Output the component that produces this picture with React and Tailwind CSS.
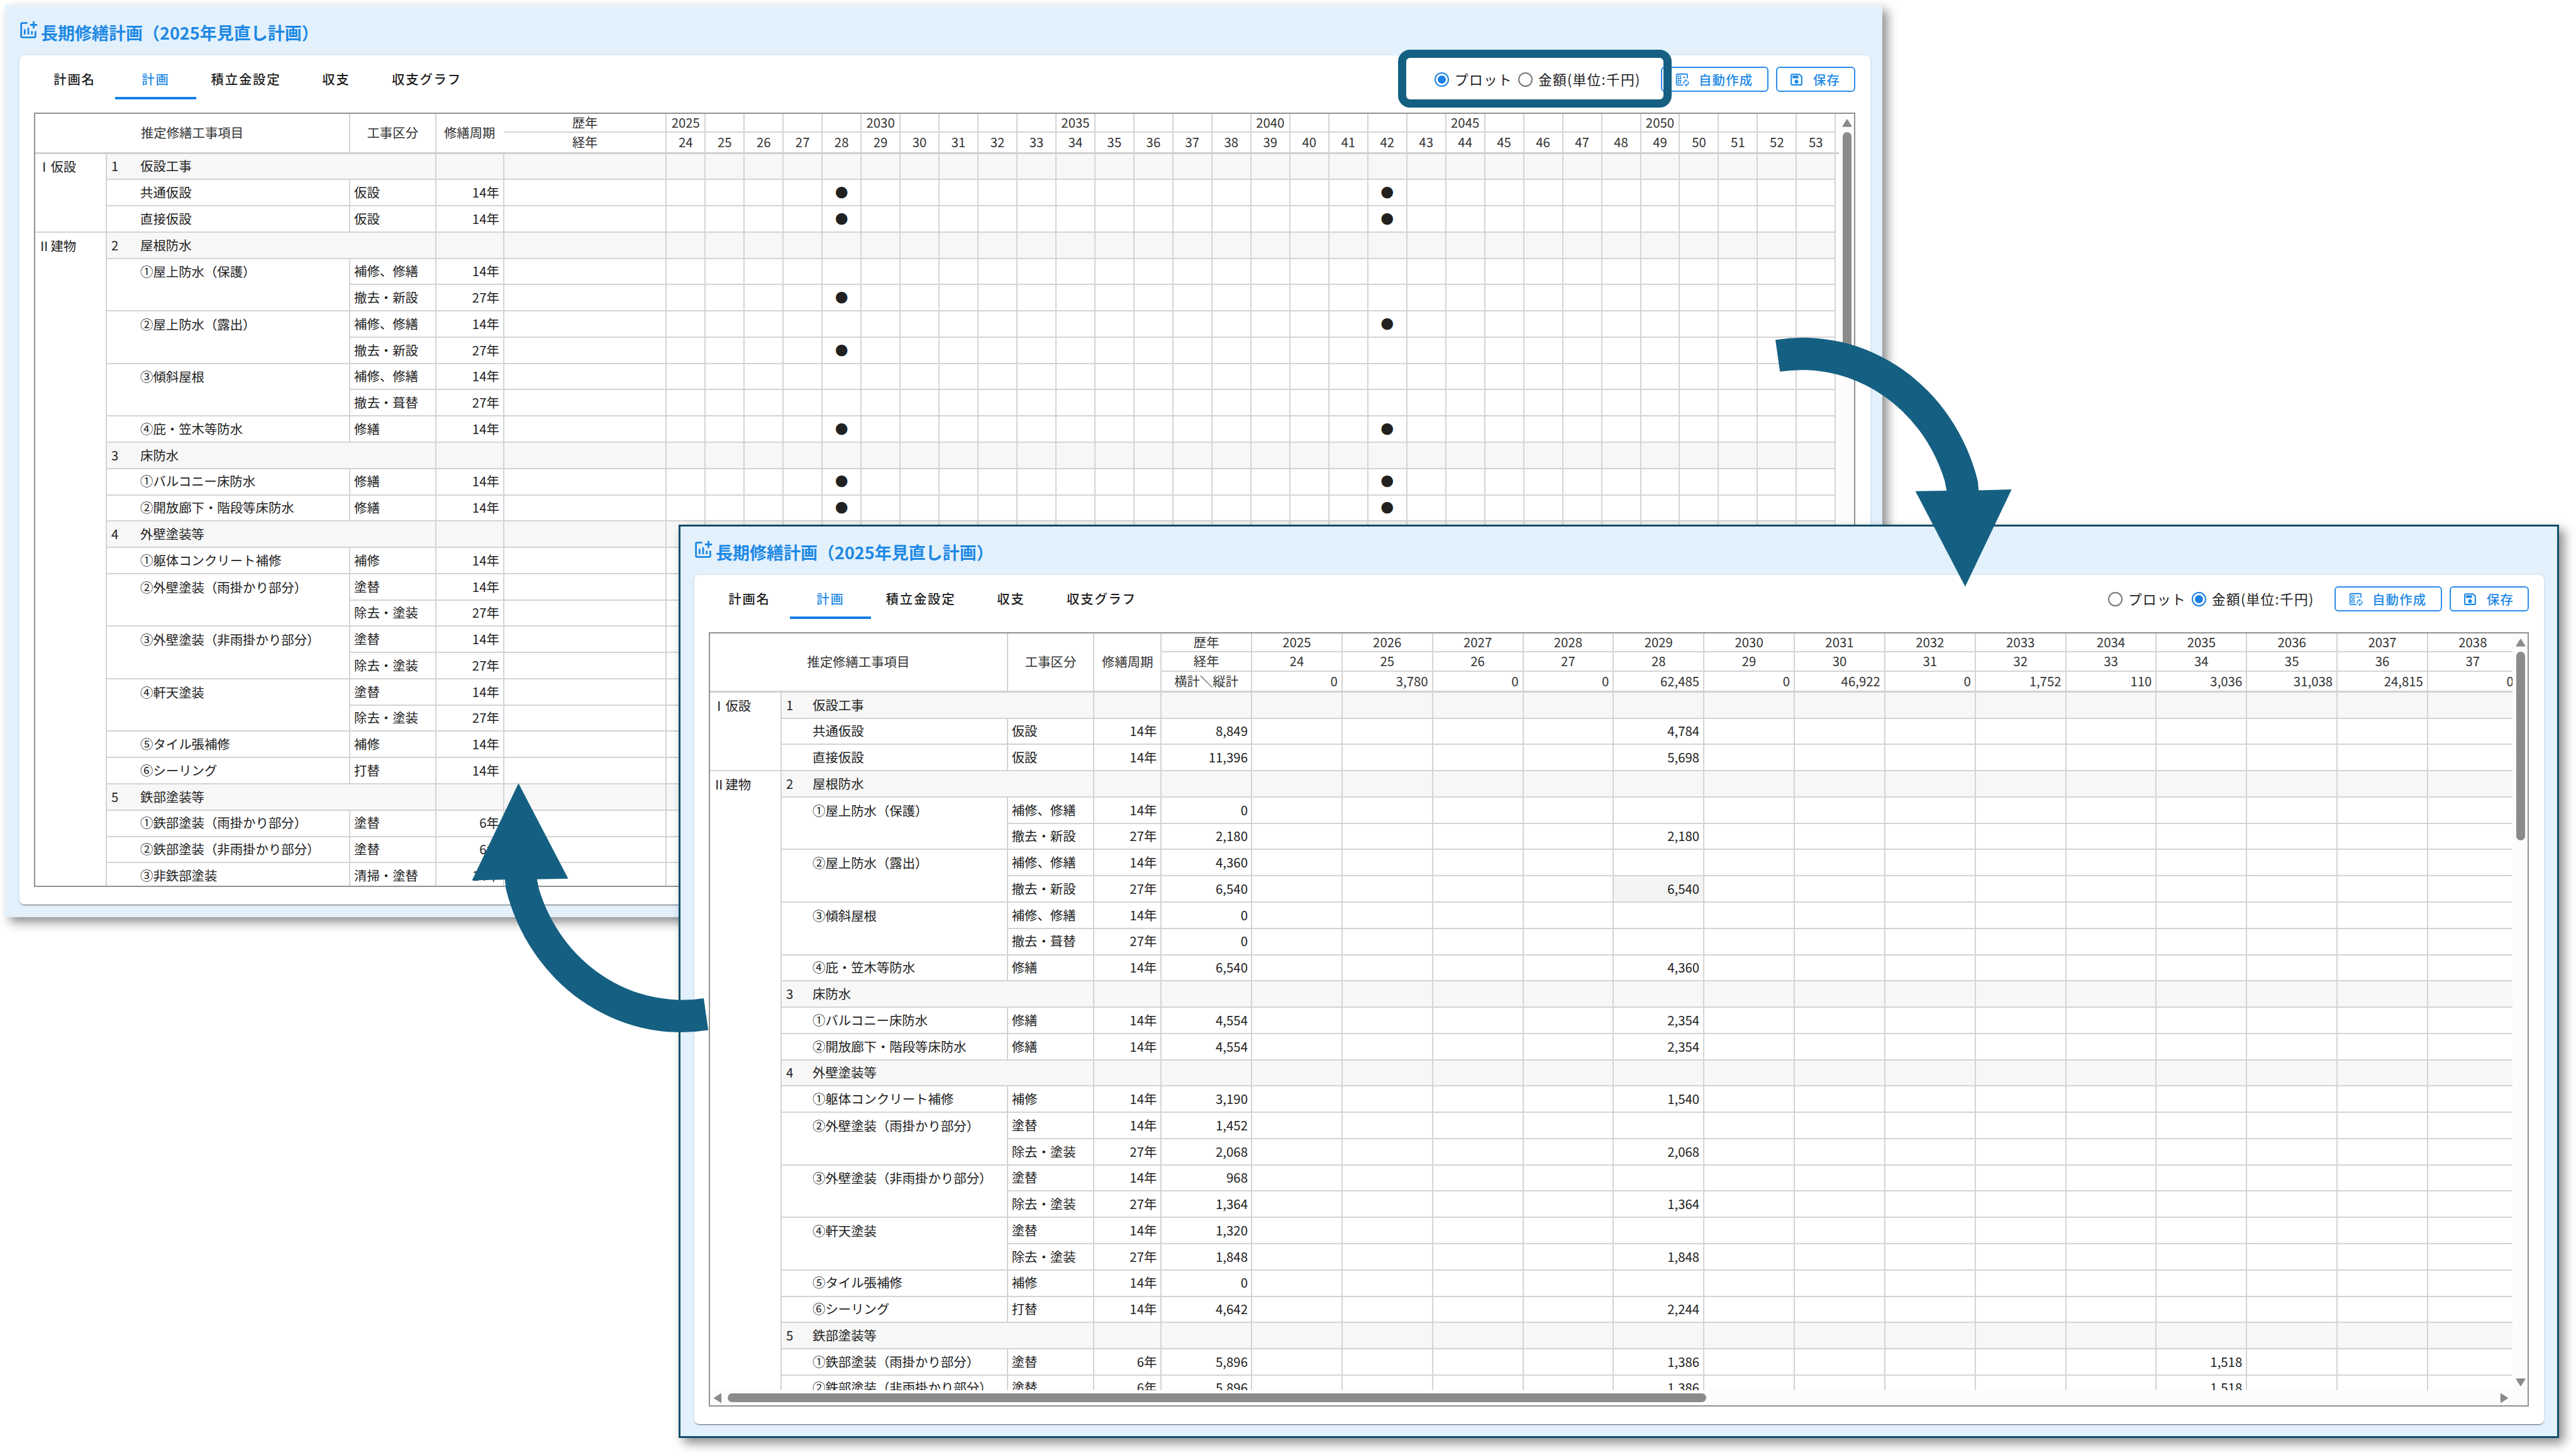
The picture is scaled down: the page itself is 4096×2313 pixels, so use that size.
import { MdOutlineAddchart, MdOutlineSave } from "react-icons/md";
import clsx from "clsx";

const TABS = [
  { label: "計画名", width: "w-[129px]" },
  { label: "計画", width: "w-[129px]", active: true },
  { label: "積立金設定", width: "w-[158px]" },
  { label: "収支", width: "w-[129px]" },
  { label: "収支グラフ", width: "w-[159px]" },
];

// plot: 経年 where a dot is drawn, amounts: 経年 -> 千円
const ROWS = [
  { cat: "Ⅰ仮設", no: "1", name: "仮設工事" },
  { name: "共通仮設", type: "仮設", cycle: 14, plot: [28, 42], sum: "8,849", amounts: { 28: "4,784" } },
  { name: "直接仮設", type: "仮設", cycle: 14, plot: [28, 42], sum: "11,396", amounts: { 28: "5,698" } },
  { cat: "Ⅱ建物", no: "2", name: "屋根防水" },
  { name: "①屋上防水（保護）", type: "補修、修繕", cycle: 14, sum: "0" },
  { type: "撤去・新設", cycle: 27, plot: [28], sum: "2,180", amounts: { 28: "2,180" } },
  { name: "②屋上防水（露出）", type: "補修、修繕", cycle: 14, plot: [42], sum: "4,360" },
  { type: "撤去・新設", cycle: 27, plot: [28], sum: "6,540", amounts: { 28: "6,540" }, hover: 28 },
  { name: "③傾斜屋根", type: "補修、修繕", cycle: 14, sum: "0" },
  { type: "撤去・葺替", cycle: 27, sum: "0" },
  { name: "④庇・笠木等防水", type: "修繕", cycle: 14, plot: [28, 42], sum: "6,540", amounts: { 28: "4,360" } },
  { no: "3", name: "床防水" },
  { name: "①バルコニー床防水", type: "修繕", cycle: 14, plot: [28, 42], sum: "4,554", amounts: { 28: "2,354" } },
  { name: "②開放廊下・階段等床防水", type: "修繕", cycle: 14, plot: [28, 42], sum: "4,554", amounts: { 28: "2,354" } },
  { no: "4", name: "外壁塗装等" },
  { name: "①躯体コンクリート補修", type: "補修", cycle: 14, sum: "3,190", amounts: { 28: "1,540" } },
  { name: "②外壁塗装（雨掛かり部分）", type: "塗替", cycle: 14, sum: "1,452" },
  { type: "除去・塗装", cycle: 27, sum: "2,068", amounts: { 28: "2,068" } },
  { name: "③外壁塗装（非雨掛かり部分）", type: "塗替", cycle: 14, sum: "968" },
  { type: "除去・塗装", cycle: 27, sum: "1,364", amounts: { 28: "1,364" } },
  { name: "④軒天塗装", type: "塗替", cycle: 14, sum: "1,320" },
  { type: "除去・塗装", cycle: 27, sum: "1,848", amounts: { 28: "1,848" } },
  { name: "⑤タイル張補修", type: "補修", cycle: 14, sum: "0" },
  { name: "⑥シーリング", type: "打替", cycle: 14, sum: "4,642", amounts: { 28: "2,244" } },
  { no: "5", name: "鉄部塗装等" },
  { name: "①鉄部塗装（雨掛かり部分）", type: "塗替", cycle: 6, sum: "5,896", amounts: { 28: "1,386", 34: "1,518" } },
  { name: "②鉄部塗装（非雨掛かり部分）", type: "塗替", cycle: 6, sum: "5,896", amounts: { 28: "1,386", 34: "1,518" } },
  { name: "③非鉄部塗装", type: "清掃・塗替", cycle: 14, sum: "" },
];

const TOTALS = ["0", "3,780", "0", "0", "62,485", "0", "46,922", "0", "1,752", "110", "3,036", "31,038", "24,815", "0"];

const PLOT = {
  head: "w-[501px]",
  cat: "w-[114px]",
  item: "w-[387px] pl-[53px]",
  no: "w-[45px]",
  group: "w-[523.5px]",
  type: "w-[136.5px]",
  cycle: "w-[108.4px]",
  sum: "w-[258.4px]",
  year: "w-[61.97px]",
  years: 30,
};

const AMOUNT = {
  head: "w-[473.7px]",
  cat: "w-[114px]",
  item: "w-[359.7px] pl-[49px]",
  no: "w-[41px]",
  group: "w-[497.4px]",
  type: "w-[137.7px]",
  cycle: "w-[107px]",
  sum: "w-[143.6px]",
  year: "w-[143.85px]",
  years: 14,
};

const LINE = "border-[#d4d4d4]";

function Cell({ className, children }) {
  return (
    <div className={clsx("flex shrink-0 items-center whitespace-nowrap border-r-2 pb-[2px]", LINE, className)}>
      {children}
    </div>
  );
}

function Arrow({ className }) {
  return (
    <svg viewBox="0 0 16 13" className={clsx("h-[13px] w-4 shrink-0 text-[#8b8b8b]", className)}>
      <path d="M8 1.6 14.4 11.8H1.6Z" fill="currentColor" stroke="currentColor" strokeWidth="2" strokeLinejoin="round" />
    </svg>
  );
}

function TableIcon() {
  return (
    <svg viewBox="0 0 24 24" className="size-[25px] shrink-0" fill="none" stroke="currentColor" strokeWidth="1.7">
      <path d="M20.200 10V5a1.400 1.400 0 0 0-1.400-1.400H5A1.400 1.400 0 0 0 3.600 5v13.800a1.400 1.400 0 0 0 1.400 1.400h8.400" />
      <path d="M6.200 6.600h3.800v4H6.200zM6.200 13.200h3.800v4H6.200zM13.400 8.600h4" strokeWidth="1.300" />
      <path d="M18 13.400a3.500 3.500 0 0 0-2.600 5.800M18.400 20.400a3.500 3.500 0 0 0 2.600-5.800" strokeWidth="1.400" />
      <path d="M17.600 11v4.800l2.600-2.400zM18.800 18v4.800l-2.600-2.400z" fill="currentColor" stroke="none" />
    </svg>
  );
}

function Radio({ checked }) {
  return (
    <span
      className={clsx(
        "flex size-[23px] shrink-0 items-center justify-center rounded-full border-2",
        checked ? "border-[#1a80e6]" : "border-[#767676]"
      )}
    >
      {checked && <span className="size-[13px] rounded-full bg-[#1a80e6]" />}
    </span>
  );
}

function Toolbar({ mode }) {
  return (
    <div className="flex h-[91px] justify-between">
      <div className="flex h-[70px]">
        {TABS.map((tab) => (
          <div
            key={tab.label}
            className={clsx(
              "flex items-center justify-center border-b-4 pt-[8px] text-[20.4px] font-medium tracking-[1.8px]",
              tab.width,
              tab.active ? "border-[#1480e6] text-[#1e88e5]" : "border-transparent text-[#1c1c1c]"
            )}
          >
            {tab.label}
          </div>
        ))}
      </div>
      <div className="flex h-10 items-center pt-[36px]">
        <label className="flex w-[133px] items-center gap-[9px] text-[21.7px] tracking-[1.3px]">
          <Radio checked={mode === "plot"} />
          プロット
        </label>
        <label className="flex w-[227px] items-center gap-[9px] text-[21.7px] tracking-[1.3px]">
          <Radio checked={mode === "amount"} />
          金額(単位:千円)
        </label>
        <button className="mr-3 flex h-10 w-[171px] items-center gap-[14px] rounded-md border-2 border-[#2b8de8] pl-[19px] text-[20.4px] font-medium tracking-[1.2px] text-[#1e88e5]">
          <TableIcon />
          <span className="pt-px">自動作成</span>
        </button>
        <button className="flex h-10 w-[126px] items-center gap-[14px] rounded-md border-2 border-[#2b8de8] pl-[18px] text-[20.4px] font-medium tracking-[1.2px] text-[#1e88e5]">
          <MdOutlineSave className="size-[25px] shrink-0" />
          <span className="pt-px">保存</span>
        </button>
      </div>
    </div>
  );
}

function HeaderRows({ cols, mode }) {
  const amount = mode === "amount";
  const years = Array.from({ length: cols.years }, (_, i) => i);
  return (
    <div className="flex border-b-[3px] border-[#d0d0d0] text-[#333]">
      <Cell className={clsx("justify-center", cols.head)}>推定修繕工事項目</Cell>
      <Cell className={clsx("justify-center", cols.type)}>工事区分</Cell>
      <Cell className={clsx("justify-center", cols.cycle, !amount && "border-r-transparent")}>修繕周期</Cell>
      <div className="flex shrink-0 flex-col">
        <Cell className={clsx("h-[30.3px] justify-center border-b-2", cols.sum)}>歴年</Cell>
        <Cell className={clsx("h-[30.3px] justify-center", cols.sum, amount && "border-b-2")}>経年</Cell>
        {amount && <Cell className={clsx("h-[30.3px] justify-center", cols.sum)}>横計＼縦計</Cell>}
      </div>
      {years.map((i) => (
        <div key={i} className="flex shrink-0 flex-col">
          <Cell className={clsx("h-[30.3px] justify-center border-b-2", cols.year)}>
            {amount || i % 5 === 0 ? 2025 + i : ""}
          </Cell>
          <Cell className={clsx("h-[30.3px] justify-center", cols.year, amount && "border-b-2")}>{24 + i}</Cell>
          {amount && <Cell className={clsx("h-[30.3px] justify-end pr-[6px]", cols.year)}>{TOTALS[i]}</Cell>}
        </div>
      ))}
    </div>
  );
}

function BodyRow({ row, next, cols, mode }) {
  const isGroup = Boolean(row.no);
  const ages = Array.from({ length: cols.years }, (_, i) => 24 + i);
  const base = clsx("border-b-2", isGroup && "bg-[#f7f7f7]");
  return (
    <div className="flex h-[41.78px]">
      <Cell className={clsx("pl-[4px]", cols.cat, next?.cat && "border-b-2")}>{row.cat}</Cell>
      {isGroup ? (
        <Cell className={clsx(base, "pl-[7px]", cols.group)}>
          <span className={cols.no}>{row.no}</span>
          <span className="pl-px">{row.name}</span>
        </Cell>
      ) : (
        <>
          <Cell className={clsx(cols.item, (!next || next.name) && "border-b-2")}>{row.name}</Cell>
          <Cell className={clsx(base, "pl-[6px]", cols.type)}>{row.type}</Cell>
        </>
      )}
      <Cell className={clsx(base, "justify-end pr-[6px]", cols.cycle)}>{row.cycle && `${row.cycle}年`}</Cell>
      <Cell className={clsx(base, "justify-end pr-[5px]", cols.sum)}>{mode === "amount" && row.sum}</Cell>
      {ages.map((age) =>
        mode === "plot" ? (
          <Cell key={age} className={clsx(base, "justify-center", cols.year)}>
            {row.plot?.includes(age) && "●"}
          </Cell>
        ) : (
          <Cell key={age} className={clsx(base, "justify-end pr-[6px]", cols.year, row.hover === age && "bg-[#f4f4f4]")}>
            {row.amounts?.[age]}
          </Cell>
        )
      )}
    </div>
  );
}

function PlanTable({ mode }) {
  const cols = mode === "plot" ? PLOT : AMOUNT;
  return (
    <div className="flex h-[1231px] flex-col border-2 border-[#919191] text-[20.4px] leading-none text-[#212121]">
      <div className="flex min-h-0 flex-1">
        <div className="min-w-0 flex-1 overflow-hidden">
          <HeaderRows cols={cols} mode={mode} />
          {ROWS.map((row, i) => (
            <BodyRow key={i} row={row} next={ROWS[i + 1]} cols={cols} mode={mode} />
          ))}
        </div>
        <div className="flex w-6 shrink-0 flex-col items-center bg-[#fcfcfc] pt-2 pb-[6px] pl-px">
          <Arrow />
          <div className={clsx("mt-[8px] w-[14px] rounded-full bg-[#8b8b8b]", mode === "plot" ? "h-[356px]" : "h-[300px]")} />
          <Arrow className="mt-auto rotate-180" />
        </div>
      </div>
      {mode === "amount" && (
        <div className="flex h-6 shrink-0 items-center bg-[#fcfcfc] pr-[29px] pl-1">
          <Arrow className="-rotate-90" />
          <div className="ml-[8px] h-[14px] w-[1556px] rounded-full bg-[#8b8b8b]" />
          <Arrow className="ml-auto rotate-90" />
        </div>
      )}
    </div>
  );
}

function PlanWindow({ mode, className }) {
  return (
    <div className={clsx("absolute bg-[#e3f1fc] shadow-[8px_8px_16px_rgba(0,0,0,0.45)]", className)}>
      <div className="flex h-20 items-start gap-[3px] pt-[23px] pl-[20px] text-[27px] leading-none font-bold text-[#1e88e5]">
        <MdOutlineAddchart className="size-[34px] shrink-0" />
        <h1 className="pt-[7px]">長期修繕計画（2025年見直し計画）</h1>
      </div>
      <div className="ml-[23px] h-[1350px] rounded-lg bg-white pr-6 pl-[23px] shadow-[0_2px_1px_-1px_rgba(0,0,0,0.5),0_1px_4px_rgba(0,0,0,0.14)]">
        <Toolbar mode={mode} />
        <PlanTable mode={mode} />
      </div>
    </div>
  );
}

const ARROW_PATH =
  "M3034 580.7A309 328 0 0 1 3380 822.7L3381.3 837.7 3437.7 836.3 3358.3 1002.3 3273.3 839.3 3326.7 838.3 3323.3 821.7A257 273 0 0 0 3041.7 635Z";

export default function App() {
  return (
    <div className="relative h-[2313px] w-[4096px] overflow-hidden bg-white font-['Noto_Sans_CJK_JP','Noto_Sans',sans-serif] text-[#212121]">
      <PlanWindow mode="plot" className="top-2 left-2 h-[1450px] w-[2985px] pr-[19px]" />
      <div className="absolute top-[79px] left-[2223px] h-[92px] w-[435px] rounded-[19px] border-[13px] border-[#156082]" />
      <PlanWindow
        mode="amount"
        className="top-[834px] left-[1079px] h-[1452px] w-[2990px] pr-6 pl-[2px] outline-[3px] -outline-offset-[3px] outline-[#124e68]"
      />
      <svg viewBox="0 0 4402 2486" className="absolute inset-0 size-full" fill="#156082">
        <path d={ARROW_PATH} />
        <path d={ARROW_PATH} transform="rotate(180 2122.1 1170.3)" />
      </svg>
    </div>
  );
}
